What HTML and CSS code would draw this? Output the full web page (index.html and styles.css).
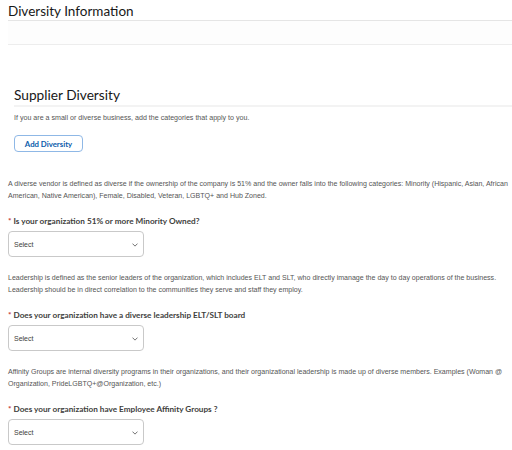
FILE: index.html
```html
<!DOCTYPE html>
<html>
<head>
<meta charset="utf-8">
<link rel="stylesheet" href="styles.css">
</head>
<body>
<div class="page">
  <h1 class="title">Diversity Information</h1>
  <div class="band"></div>
  <section class="supplier">
    <h2 class="sub-title">Supplier Diversity</h2>
    <p class="hint">If you are a small or diverse business, add the categories that apply to you.</p>
    <button class="add-btn">Add Diversity</button>
  </section>
  <section class="questions">
    <p class="desc">A diverse vendor is defined as diverse if the ownership of the company is 51% and the owner falls into the following categories: Minority (Hispanic, Asian, African American, Native American), Female, Disabled, Veteran, LGBTQ+ and Hub Zoned.</p>
    <div class="field">
      <label class="label"><span class="req">*</span>Is your organization 51% or more Minority Owned?</label>
      <div class="select"><span>Select</span><svg class="chev" viewBox="0 0 8 5" width="6" height="4"><path d="M1 1l3 3 3-3" fill="none" stroke="#555" stroke-width="1.1" stroke-linecap="round" stroke-linejoin="round"/></svg></div>
    </div>
    <p class="desc">Leadership is defined as the senior leaders of the organization, which includes ELT and SLT, who directly imanage the day to day operations of the business. Leadership should be in direct correlation to the communities they serve and staff they employ.</p>
    <div class="field">
      <label class="label"><span class="req">*</span>Does your organization have a diverse leadership ELT/SLT board</label>
      <div class="select"><span>Select</span><svg class="chev" viewBox="0 0 8 5" width="6" height="4"><path d="M1 1l3 3 3-3" fill="none" stroke="#555" stroke-width="1.1" stroke-linecap="round" stroke-linejoin="round"/></svg></div>
    </div>
    <p class="desc">Affinity Groups are internal diversity programs in their organizations, and their organizational leadership is made up of diverse members. Examples (Woman @ Organization, PrideLGBTQ+@Organization, etc.)</p>
    <div class="field">
      <label class="label"><span class="req">*</span>Does your organization have Employee Affinity Groups ?</label>
      <div class="select"><span>Select</span><svg class="chev" viewBox="0 0 8 5" width="6" height="4"><path d="M1 1l3 3 3-3" fill="none" stroke="#555" stroke-width="1.1" stroke-linecap="round" stroke-linejoin="round"/></svg></div>
    </div>
  </section>
</div>
</body>
</html>
```

FILE: styles.css
```css
* { box-sizing: border-box; }
html, body { margin: 0; padding: 0; background: #fff; }
body { font-family: "Liberation Sans", Arial, sans-serif; color: #3e3e3c; }
.page { padding: 0 0 0 8px; }
.title {
  margin: 0;
  font-family: "Lato", sans-serif;
  font-weight: 400;
  font-size: 13.5px;
  line-height: 21px;
  height: 21px;
  padding-top: 1px;
  color: #181818;
  border-bottom: 1px solid #e5e5e5;
}
.band {
  height: 24px;
  background: #fdfdfd;
  border-bottom: 1px solid #ededed;
}
.supplier { padding: 40px 0 0 6px; }
.sub-title {
  margin: 0;
  font-family: "Lato", sans-serif;
  font-weight: 400;
  font-size: 13.7px;
  line-height: 20px;
  color: #181818;
  border-bottom: 2px solid #f3f3f3;
}
.hint { margin: 7px 0 0; font-size: 7.1px; line-height: 9px; color: #555; }
.add-btn {
  display: block;
  margin-top: 12px;
  width: 69px;
  height: 17px;
  padding: 0;
  border: 1px solid #8fb8e6;
  border-radius: 4px;
  background: #fff;
  font-family: "Lato", sans-serif;
  font-weight: 700;
  font-size: 7.8px;
  color: #0b5cab;
}
.questions { padding-top: 26px; }
.desc { margin: 0; font-size: 7.05px; line-height: 12px; color: #555; }
.field { margin: 14px 0 15px; }
.label { display: block; font-family: "Lato", sans-serif; font-weight: 700; font-size: 8.2px; line-height: 10px; color: #3e3e3c; }
.req { color: #c23934; margin-right: 2px; }
.select {
  margin-top: 5px;
  width: 136px;
  height: 26px;
  border: 1px solid #c9c9c9;
  border-radius: 4px;
  display: flex;
  align-items: center;
  justify-content: space-between;
  padding: 0 5px 0 5px;
  font-size: 7px;
  color: #3e3e3c;
}
.chev { margin-top: 2px; }
```
